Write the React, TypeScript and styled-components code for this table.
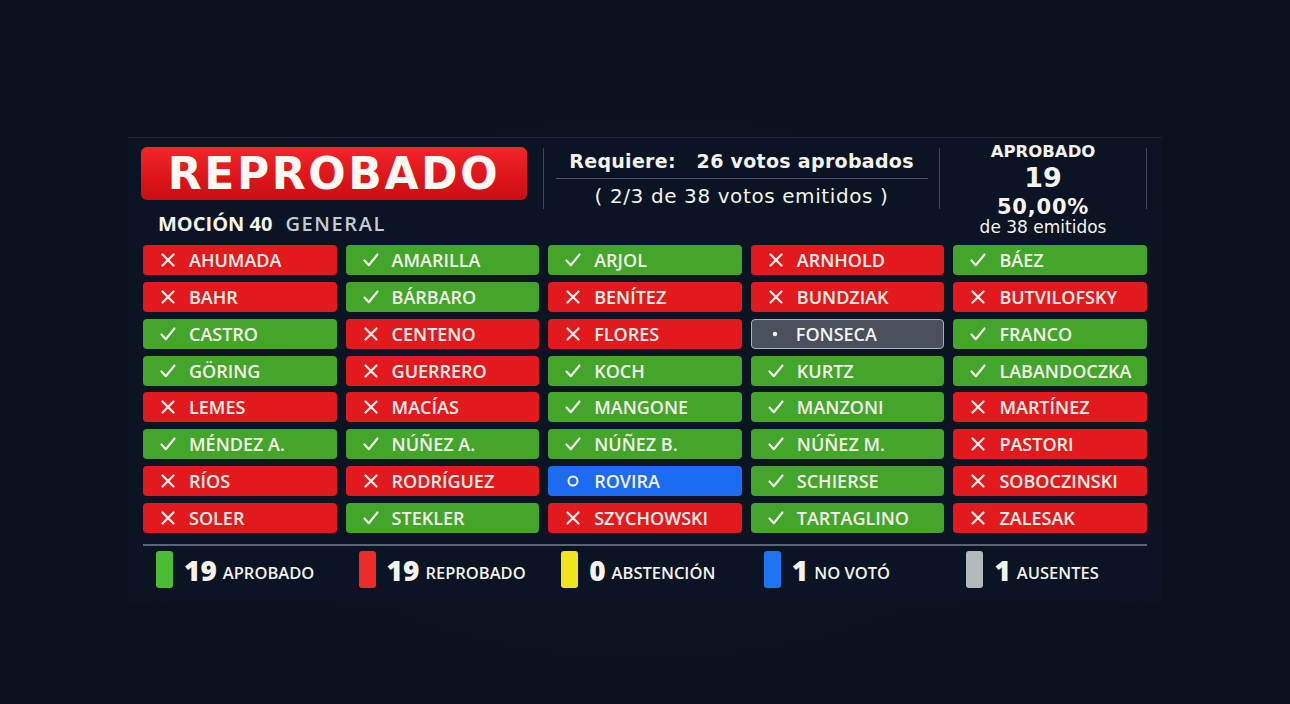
import React from "react";
import styled, { createGlobalStyle } from "styled-components";

type Vote = "si" | "no" | "ausente" | "novoto";

const COLOURS: Record<Vote, string> = {
  si: "#44a52b",
  no: "#e31a1d",
  ausente: "#4a505c",
  novoto: "#1b6cf1"
};

const TEXT = "#f4f2ec";
const WIDE = `"DejaVu Sans", Verdana, sans-serif`;

const VOTOS: [string, Vote][] = [
  ["AHUMADA", "no"], ["AMARILLA", "si"], ["ARJOL", "si"], ["ARNHOLD", "no"], ["BÁEZ", "si"],
  ["BAHR", "no"], ["BÁRBARO", "si"], ["BENÍTEZ", "no"], ["BUNDZIAK", "no"], ["BUTVILOFSKY", "no"],
  ["CASTRO", "si"], ["CENTENO", "no"], ["FLORES", "no"], ["FONSECA", "ausente"], ["FRANCO", "si"],
  ["GÖRING", "si"], ["GUERRERO", "no"], ["KOCH", "si"], ["KURTZ", "si"], ["LABANDOCZKA", "si"],
  ["LEMES", "no"], ["MACÍAS", "no"], ["MANGONE", "si"], ["MANZONI", "si"], ["MARTÍNEZ", "no"],
  ["MÉNDEZ A.", "si"], ["NÚÑEZ A.", "si"], ["NÚÑEZ B.", "si"], ["NÚÑEZ M.", "si"], ["PASTORI", "no"],
  ["RÍOS", "no"], ["RODRÍGUEZ", "no"], ["ROVIRA", "novoto"], ["SCHIERSE", "si"], ["SOBOCZINSKI", "no"],
  ["SOLER", "no"], ["STEKLER", "si"], ["SZYCHOWSKI", "no"], ["TARTAGLINO", "si"], ["ZALESAK", "no"]
];

const LEYENDA = [
  { n: 19, label: "APROBADO", colour: "#4cbb35" },
  { n: 19, label: "REPROBADO", colour: "#ee2b2b" },
  { n: 0, label: "ABSTENCIÓN", colour: "#f2e41c" },
  { n: 1, label: "NO VOTÓ", colour: "#1f74f2" },
  { n: 1, label: "AUSENTES", colour: "#b4b7bc" }
];

const GlobalStyle = createGlobalStyle`
  html, body {
    margin: 0;
    padding: 0;
    background: #09111d;
  }
  body {
    font-family: "Open Sans", "Noto Sans", sans-serif;
    color: ${TEXT};
  }
`;

const Page = styled.div`
  width: 1290px;
  height: 704px;
  padding: 137px 0 0 128px;
  box-sizing: border-box;
  background: radial-gradient(ellipse at 50% 55%, #0c1624 0%, #09111d 70%);
`;

const Panel = styled.div`
  width: 1034px;
  box-sizing: border-box;
  padding: 9px 15px 12px;
  background: #0a1422;
  border-top: 1px solid #1a2536;
  display: flex;
  flex-direction: column;
`;

const Header = styled.div`
  display: flex;
  height: 92px;
  margin-bottom: 6px;
`;

const TitleBlock = styled.div`
  width: 402px;
  display: flex;
  flex-direction: column;
`;

const Title = styled.div`
  width: 386px;
  height: 53px;
  margin-left: -2px;
  border-radius: 6px;
  background: linear-gradient(180deg, #f2262a 0%, #de1419 60%, #c70f14 100%);
  display: flex;
  align-items: center;
  justify-content: center;
  font-family: ${WIDE};
  font-size: 44px;
  font-weight: 700;
  letter-spacing: 2.6px;
  color: #fbf9f4;
`;

const Motion = styled.div`
  margin: 10px 0 0 15px;
  font-size: 20px;
  font-weight: 700;
  display: flex;
  gap: 13px;

  span {
    font-size: 20px;
    font-weight: 600;
    letter-spacing: 1.6px;
    color: #c6cad3;
  }
`;

const Divider = styled.div`
  width: 1px;
  height: 61px;
  margin-top: 1px;
  background: #3b4656;
`;

const Required = styled.div`
  width: 397px;
  display: flex;
  flex-direction: column;
  align-items: center;
  font-family: ${WIDE};
`;

const RequiredMain = styled.div`
  width: 372px;
  padding: 3px 0 6px;
  text-align: center;
  font-size: 19px;
  letter-spacing: 0.3px;
  font-weight: 700;
  border-bottom: 1px solid #4a5566;
  white-space: pre;
`;

const RequiredSub = styled.div`
  margin-top: 5px;
  font-size: 20px;
  letter-spacing: 0.6px;
  font-weight: 400;
  white-space: pre;
`;

const Result = styled.div`
  width: 207px;
  display: flex;
  flex-direction: column;
  align-items: center;
  margin-top: -5px;
  font-family: ${WIDE};
`;

const ResultLabel = styled.div`
  height: 20px;
  line-height: 20px;
  font-size: 16.5px;
  font-weight: 700;
`;

const ResultCount = styled.div`
  margin-top: 2px;
  height: 28px;
  line-height: 28px;
  font-size: 27px;
  font-weight: 700;
`;

const ResultPct = styled.div`
  margin-top: 4px;
  height: 22px;
  line-height: 22px;
  font-size: 21px;
  letter-spacing: 0.8px;
  font-weight: 700;
`;

const ResultSub = styled.div`
  height: 18px;
  line-height: 18px;
  font-size: 17px;
  font-weight: 400;
`;

const Grid = styled.div`
  display: grid;
  grid-template-columns: repeat(5, 1fr);
  column-gap: 9px;
  row-gap: 6.85px;
`;

const Seat = styled.div<{ $vote: Vote }>`
  height: 30px;
  box-sizing: border-box;
  border-radius: 4px;
  background: ${(p) => COLOURS[p.$vote]};
  border: ${(p) => (p.$vote === "ausente" ? "1.5px solid #a9aeb8" : "none")};
  display: flex;
  align-items: center;
  padding-left: ${(p) => (p.$vote === "ausente" ? "14px" : "16px")};
  gap: 12px;
  font-size: 18px;
  font-weight: 600;
  color: ${TEXT};
  white-space: nowrap;
`;

const IconBox = styled.div`
  width: 18px;
  height: 18px;
  display: flex;
  align-items: center;
  justify-content: center;
`;

const VoteIcon = ({ vote }: { vote: Vote }) => {
  let icon: JSX.Element;
  if (vote === "si") {
    icon = (
      <svg width="18" height="18" viewBox="0 0 18 18">
        <path d="M2.5 9.5 L6.8 14.2 L15.5 3.5" fill="none" stroke={TEXT} strokeWidth="2.2" strokeLinecap="round" strokeLinejoin="round" />
      </svg>
    );
  } else if (vote === "no") {
    icon = (
      <svg width="16" height="16" viewBox="0 0 16 16">
        <path d="M2.5 2.5 L13.5 13.5 M13.5 2.5 L2.5 13.5" fill="none" stroke={TEXT} strokeWidth="2.2" strokeLinecap="round" />
      </svg>
    );
  } else if (vote === "novoto") {
    icon = (
      <svg width="14" height="14" viewBox="0 0 14 14">
        <circle cx="7" cy="7" r="4.5" fill="none" stroke={TEXT} strokeWidth="2" />
      </svg>
    );
  } else {
    icon = (
      <svg width="8" height="8" viewBox="0 0 8 8">
        <circle cx="4" cy="4" r="2.2" fill={TEXT} />
      </svg>
    );
  }
  return <IconBox>{icon}</IconBox>;
};

const Footer = styled.div`
  margin-top: 11px;
  border-top: 2px solid #5b6472;
  padding-top: 5px;
  display: grid;
  grid-template-columns: repeat(5, 1fr);
  column-gap: 9px;
`;

const LegendItem = styled.div`
  display: flex;
  align-items: center;
  padding-left: 13px;
  height: 38px;
`;

const Swatch = styled.div<{ $colour: string }>`
  width: 17px;
  height: 37px;
  border-radius: 3px;
  background: ${(p) => p.$colour};
  margin-right: 11px;
`;

const LegendCount = styled.span`
  font-size: 28px;
  font-weight: 800;
  margin-right: 6px;
`;

const LegendLabel = styled.span`
  font-size: 16.5px;
  font-weight: 600;
  margin-top: 5px;
`;

export default function App() {
  return (
    <>
      <GlobalStyle />
      <Page>
        <Panel>
          <Header>
            <TitleBlock>
              <Title>REPROBADO</Title>
              <Motion>
                MOCIÓN 40 <span>GENERAL</span>
              </Motion>
            </TitleBlock>
            <Divider />
            <Required>
              <RequiredMain>{"Requiere:   26 votos aprobados"}</RequiredMain>
              <RequiredSub>{"( 2/3 de 38 votos emitidos )"}</RequiredSub>
            </Required>
            <Divider />
            <Result>
              <ResultLabel>APROBADO</ResultLabel>
              <ResultCount>19</ResultCount>
              <ResultPct>50,00%</ResultPct>
              <ResultSub>de 38 emitidos</ResultSub>
            </Result>
            <Divider />
          </Header>
          <Grid>
            {VOTOS.map(([name, vote]) => (
              <Seat key={name} $vote={vote}>
                <VoteIcon vote={vote} />
                {name}
              </Seat>
            ))}
          </Grid>
          <Footer>
            {LEYENDA.map((l) => (
              <LegendItem key={l.label}>
                <Swatch $colour={l.colour} />
                <LegendCount>{l.n}</LegendCount>
                <LegendLabel>{l.label}</LegendLabel>
              </LegendItem>
            ))}
          </Footer>
        </Panel>
      </Page>
    </>
  );
}
